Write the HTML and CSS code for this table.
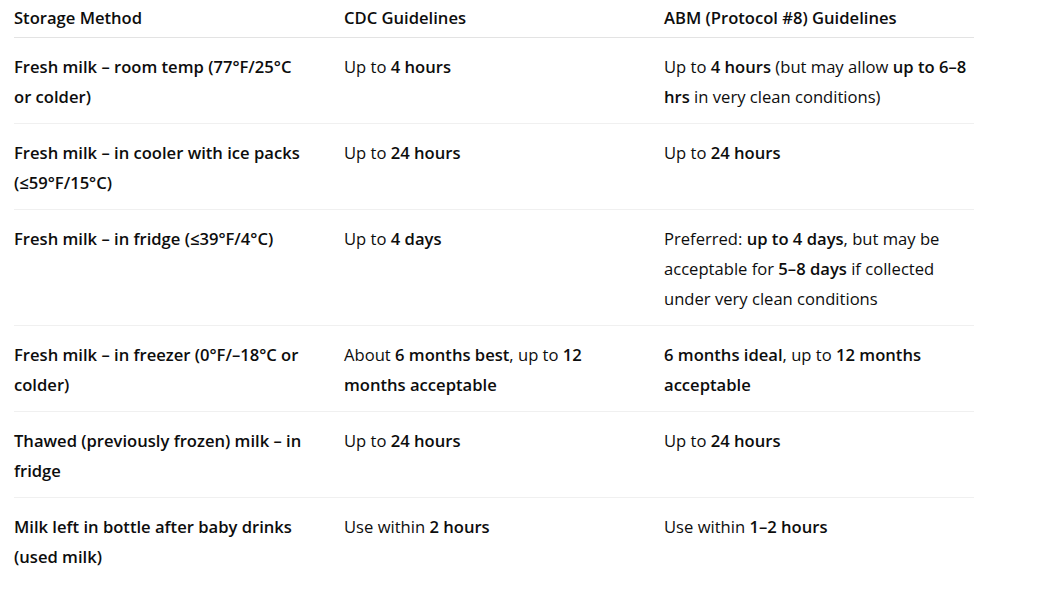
FILE: index.html
```html
<!DOCTYPE html>
<html lang="en">
<head>
<meta charset="utf-8">
<title>Breast milk storage guidelines</title>
<link rel="stylesheet" href="styles.css">
</head>
<body>
<div class="page">
<table class="guide">
  <colgroup>
    <col class="c1"><col class="c2"><col class="c3">
  </colgroup>
  <thead>
    <tr><th>Storage Method</th><th>CDC Guidelines</th><th>ABM (Protocol #8) Guidelines</th></tr>
  </thead>
  <tbody>
    <tr>
      <td class="method">Fresh milk – room temp (77°F/25°C<br>or colder)</td>
      <td>Up to <b>4 hours</b></td>
      <td>Up to <b>4 hours</b> (but may allow <b>up to 6–8<br>hrs</b> in very clean conditions)</td>
    </tr>
    <tr>
      <td class="method">Fresh milk – in cooler with ice packs<br>(≤59°F/15°C)</td>
      <td>Up to <b>24 hours</b></td>
      <td>Up to <b>24 hours</b></td>
    </tr>
    <tr>
      <td class="method">Fresh milk – in fridge (≤39°F/4°C)</td>
      <td>Up to <b>4 days</b></td>
      <td>Preferred: <b>up to 4 days</b>, but may be<br>acceptable for <b>5–8 days</b> if collected<br>under very clean conditions</td>
    </tr>
    <tr>
      <td class="method">Fresh milk – in freezer (0°F/–18°C or<br>colder)</td>
      <td>About <b>6 months best</b>, up to <b>12<br>months acceptable</b></td>
      <td><b>6 months ideal</b>, up to <b>12 months<br>acceptable</b></td>
    </tr>
    <tr>
      <td class="method">Thawed (previously frozen) milk – in<br>fridge</td>
      <td>Up to <b>24 hours</b></td>
      <td>Up to <b>24 hours</b></td>
    </tr>
    <tr>
      <td class="method">Milk left in bottle after baby drinks<br>(used milk)</td>
      <td>Use within <b>2 hours</b></td>
      <td>Use within <b>1–2 hours</b></td>
    </tr>
  </tbody>
</table>
</div>
</body>
</html>
```
FILE: styles.css
```css
html, body {
  margin: 0;
  padding: 0;
  background: #ffffff;
}

.page {
  padding: 0 0 0 14px;
  font-family: "Open Sans", "Noto Sans", "DejaVu Sans", sans-serif;
  font-size: 16.6px;
  line-height: 30px;
  color: #0d0d0d;
}

.guide {
  border-collapse: collapse;
  table-layout: fixed;
  width: 960px;
}

.c1 { width: 330px; }
.c2 { width: 320px; }
.c3 { width: 310px; }

.guide th,
.guide td {
  text-align: left;
  vertical-align: top;
  padding: 0 4px 0 0;
  white-space: nowrap;
}

.guide th {
  font-weight: 600;
  padding-top: 3px;
  padding-bottom: 4px;
  border-bottom: 1px solid #e3e3e3;
}

.guide td {
  font-weight: 400;
  padding-top: 14px;
  padding-bottom: 11px;
  border-bottom: 1px solid #f0f0f0;
}

.guide tbody tr:last-child td {
  border-bottom: none;
}

.guide td.method,
.guide b {
  font-weight: 600;
}
```
